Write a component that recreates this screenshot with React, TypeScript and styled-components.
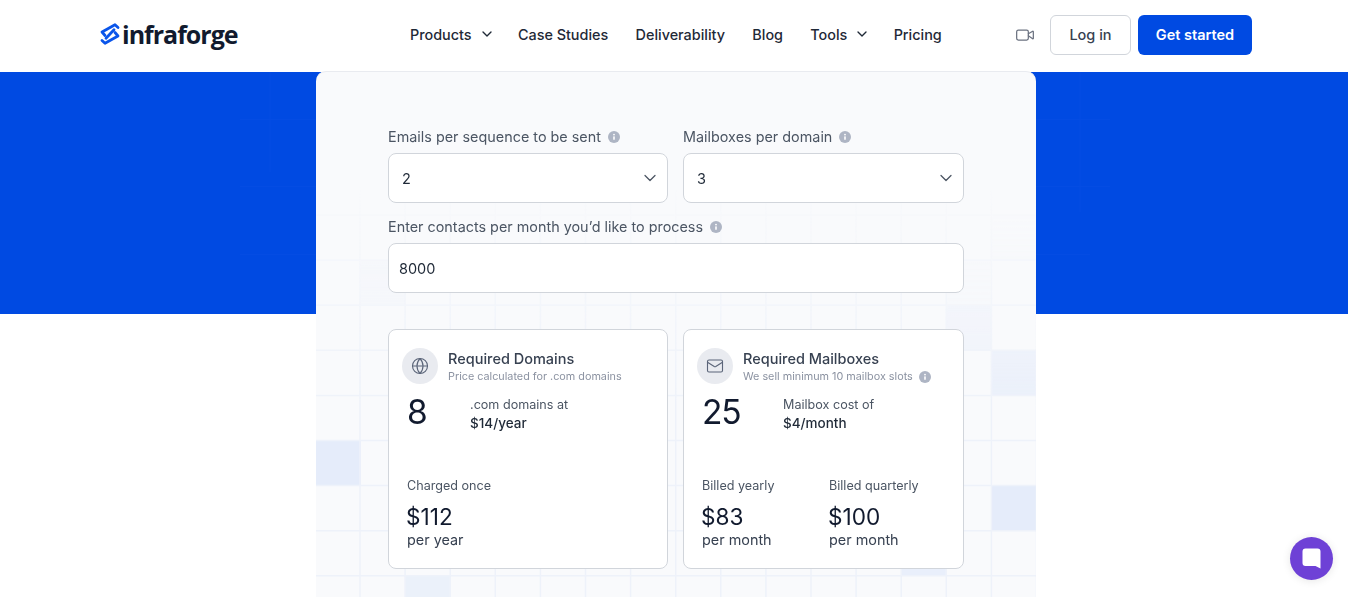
import React from "react";
import styled, { createGlobalStyle } from "styled-components";
import { ChevronDown, Globe, Mail, Video } from "lucide-react";

const Global = createGlobalStyle`
  html, body { margin: 0; padding: 0; height: 597px; overflow: hidden; background: #fff; }
  body { font-family: Inter, "Liberation Sans", sans-serif; color: #111827; }
  * { box-sizing: border-box; }
`;

const Page = styled.div`
  position: relative;
  height: 597px;
  overflow: hidden;
`;

const Header = styled.header`
  height: 72px;
  padding: 15px 96px 0 100px;
  display: flex;
  align-items: flex-start;
  background: #fff;
`;

const Logo = styled.a`
  display: flex;
  align-items: center;
  height: 40px;
  width: 310px;
  padding-bottom: 3px;
  gap: 2px;
  font-family: "Open Sans", sans-serif;
  font-size: 25px;
  font-weight: 700;
  letter-spacing: -1px;
  color: #111a2e;
`;

const Nav = styled.nav`
  display: flex;
  align-items: center;
  gap: 27.3px;
  height: 40px;
  padding-bottom: 2px;
`;

const NavItem = styled.a`
  display: flex;
  align-items: center;
  gap: 7px;
  font-size: 14.4px;
  font-weight: 500;
  color: #1f2937;
  white-space: nowrap;
`;

const NavChevron = styled(ChevronDown)`
  margin-right: -4px;
`;

const Actions = styled.div`
  margin-left: auto;
  display: flex;
  align-items: center;
  height: 40px;
`;

const VideoButton = styled.span`
  display: flex;
  margin-right: 15px;
  color: #6b7280;
`;

const LoginButton = styled.a`
  width: 81px;
  height: 40px;
  margin-right: 7px;
  padding-bottom: 1px;
  display: flex;
  align-items: center;
  justify-content: center;
  border: 1px solid #d1d5db;
  border-radius: 6px;
  background: #fff;
  font-size: 14.5px;
  font-weight: 500;
  color: #374151;
`;

const StartButton = styled.a`
  width: 114px;
  height: 40px;
  padding-bottom: 1px;
  display: flex;
  align-items: center;
  justify-content: center;
  border-radius: 6px;
  background: #004ae2;
  font-size: 14.5px;
  font-weight: 600;
  color: #fff;
`;

const Band = styled.section`
  position: relative;
  height: 242px;
  background: #004ae2;
`;

const BandArt = styled.svg`
  position: absolute;
  inset: 0;
  width: 1348px;
  height: 242px;
`;

const Panel = styled.main`
  position: relative;
  width: 720px;
  height: 560px;
  margin: -243px auto 0 316px;
  padding: 56px 72px 0;
  border-radius: 10px 10px 0 0;
  background: #f9fafc;
  box-shadow: inset 0 1px 0 #e9ebf0;
`;

const GridArt = styled.svg`
  position: absolute;
  inset: 0;
  width: 720px;
  height: 560px;
  pointer-events: none;
`;

const Form = styled.div`
  position: relative;
  display: grid;
  grid-template-columns: 280px 281px;
  column-gap: 15px;
`;

const Field = styled.div<{ $wide?: boolean }>`
  grid-column: ${(p) => (p.$wide ? "1 / -1" : "auto")};
`;

const Label = styled.div`
  display: flex;
  align-items: center;
  gap: 7px;
  height: 20px;
  margin-bottom: 6px;
  font-size: 14.38px;
  line-height: 20px;
  color: #4b5563;
  white-space: nowrap;
`;

const FieldBox = styled.div<{ $select?: boolean }>`
  height: 50px;
  display: flex;
  align-items: center;
  justify-content: space-between;
  padding: ${(p) => (p.$select ? "0 7px 0 13px" : "0 10px")};
  margin-bottom: 14px;
  border: 1px solid #d1d5db;
  border-radius: 8px;
  background: #fff;
  font-size: 14.5px;
  color: #1f2937;
`;

const Chevron = styled(ChevronDown)`
  color: #4b5563;
`;

const Cards = styled.div`
  position: relative;
  grid-column: 1 / -1;
  display: grid;
  grid-template-columns: 280px 281px;
  column-gap: 15px;
  margin-top: 22px;
`;

const Card = styled.article`
  height: 240px;
  padding: 18px 13px 0;
  border: 1px solid #d1d5db;
  border-radius: 8px;
  background: #fff;
`;

const CardHead = styled.div`
  display: flex;
  align-items: center;
  gap: 10px;
`;

const IconCircle = styled.span`
  flex: none;
  width: 36px;
  height: 36px;
  display: flex;
  align-items: center;
  justify-content: center;
  border-radius: 50%;
  background: #e9ebf0;
  color: #5b6579;
`;

const CardTitle = styled.div`
  font-size: 14.5px;
  line-height: 20px;
  font-weight: 500;
  color: #374151;
`;

const CardSub = styled.div`
  display: flex;
  align-items: center;
  gap: 6px;
  margin-top: 1px;
  font-size: 10.8px;
  line-height: 14px;
  color: #8b92a1;
  white-space: nowrap;
`;

const StatRow = styled.div<{ $col: number }>`
  display: grid;
  grid-template-columns: ${(p) => p.$col}px 1fr;
  padding-left: 5px;
  margin-top: 8px;
  height: 85px;
`;

const StatNum = styled.div`
  font-size: 33.5px;
  line-height: 40px;
  letter-spacing: -1.2px;
  color: #111a2e;
`;

const StatText = styled.div`
  font-size: 12.6px;
  line-height: 19px;
  padding-top: 3px;
  color: #4b5563;
`;

const StatStrong = styled.div`
  font-size: 13.5px;
  font-weight: 500;
  color: #1f2937;
`;

const Prices = styled.div`
  display: grid;
  grid-template-columns: 127px 1fr;
  padding-left: 5px;
`;

const PriceLabel = styled.div`
  font-size: 12.6px;
  line-height: 18px;
  color: #4b5563;
`;

const PriceValue = styled.div`
  margin-top: 8px;
  margin-left: -1px;
  font-size: 22.6px;
  line-height: 28px;
  color: #111a2e;
`;

const PriceUnit = styled.div`
  margin-top: -1px;
  font-size: 14.4px;
  line-height: 20px;
  color: #374151;
`;

const Chat = styled.button`
  position: absolute;
  left: 1290px;
  top: 537px;
  width: 43px;
  height: 43px;
  padding: 0;
  display: flex;
  align-items: center;
  justify-content: center;
  border: none;
  border-radius: 50%;
  background: #6e41d6;
  box-shadow: 0 1px 8px rgba(0, 0, 0, 0.1);
`;

const InfoIcon = () => (
  <svg width="12" height="12" viewBox="0 0 12 12" style={{ flex: "none" }}>
    <circle cx="6" cy="6" r="6" fill="#aeb5c4" />
    <rect x="5.2" y="5.2" width="1.6" height="3.6" rx="0.6" fill="#fff" />
    <circle cx="6" cy="3.6" r="0.9" fill="#fff" />
  </svg>
);

const LogoMark = () => (
  <svg width="20" height="22" viewBox="0 0 20 22" fill="none" stroke="#0a55ea" strokeWidth="2.8" strokeLinejoin="round" strokeLinecap="round">
    <path d="M18 4.500 L15 1.800 L2 9 L5 12.500" />
    <path d="M2 17.500 L5 20.200 L18 13 L15 9.500" />
    <path d="M6 15.200 L14 6.800" />
  </svg>
);

type Cell = [number, number, number];
const cells: Cell[] = [
  [0, 370, 1],
  [44, 189, 0.35],
  [631, 234, 0.5],
  [676, 279, 0.75],
  [676, 414, 1],
  [676, 144, 0.15],
  [631, 189, 0.15],
  [89, 504, 0.7],
  [586, 459, 0.8],
];

const Art = () => {
  const xs = Array.from({ length: 16 }, (_, i) => 44 + i * 45.1);
  const ys = Array.from({ length: 9 }, (_, i) => 144 + i * 45.1);
  return (
    <GridArt viewBox="0 0 720 560">
      <defs>
        <linearGradient id="fade" x1="0" y1="0" x2="0" y2="1">
          <stop offset="0.2" stopColor="#fff" stopOpacity="0" />
          <stop offset="0.6" stopColor="#fff" stopOpacity="1" />
        </linearGradient>
        <mask id="m">
          <rect width="720" height="560" fill="url(#fade)" />
        </mask>
      </defs>
      <g mask="url(#m)">
        {cells.map(([x, y, o]) => (
          <rect key={`${x}-${y}`} x={x} y={y} width="45" height="45" fill="#e5ecfa" opacity={o} />
        ))}
        {xs.map((x) => (
          <line key={x} x1={x} x2={x} y1="100" y2="560" stroke="#eef2fa" strokeWidth="1.5" />
        ))}
        {ys.map((y) => (
          <line key={y} x1="0" x2="720" y1={y} y2={y} stroke="#eef2fa" strokeWidth="1.5" />
        ))}
      </g>
    </GridArt>
  );
};

const navItems: { label: string; menu?: boolean }[] = [
  { label: "Products", menu: true },
  { label: "Case Studies" },
  { label: "Deliverability" },
  { label: "Blog" },
  { label: "Tools", menu: true },
  { label: "Pricing" },
];

export default function App() {
  return (
    <Page>
      <Global />
      <Header>
        <Logo>
          <LogoMark />
          infraforge
        </Logo>
        <Nav>
          {navItems.map((n) => (
            <NavItem key={n.label}>
              {n.label}
              {n.menu && <NavChevron size={16} strokeWidth={2} />}
            </NavItem>
          ))}
        </Nav>
        <Actions>
          <VideoButton>
            <Video size={20} strokeWidth={1.5} />
          </VideoButton>
          <LoginButton>Log in</LoginButton>
          <StartButton>Get started</StartButton>
        </Actions>
      </Header>
      <Band>
        <BandArt viewBox="0 0 1348 242" fill="none" stroke="#044ce3" strokeWidth="1">
          <path d="M240 47.500H316M270 0V100M240 114.500H316M240 182.500H316" />
          <path d="M1036 47.500H1110M1080 0V140M1036 114.500H1110M1036 182.500H1090" />
        </BandArt>
      </Band>
      <Panel>
        <Art />
        <Form>
          <Field>
            <Label>
              Emails per sequence to be sent <InfoIcon />
            </Label>
            <FieldBox $select>
              2
              <Chevron size={20} strokeWidth={1.5} />
            </FieldBox>
          </Field>
          <Field>
            <Label>
              Mailboxes per domain <InfoIcon />
            </Label>
            <FieldBox $select>
              3
              <Chevron size={20} strokeWidth={1.5} />
            </FieldBox>
          </Field>
          <Field $wide>
            <Label>
              Enter contacts per month you’d like to process <InfoIcon />
            </Label>
            <FieldBox>8000</FieldBox>
          </Field>
          <Cards>
            <Card>
              <CardHead>
                <IconCircle>
                  <Globe size={18} strokeWidth={1.5} />
                </IconCircle>
                <div>
                  <CardTitle>Required Domains</CardTitle>
                  <CardSub>Price calculated for .com domains</CardSub>
                </div>
              </CardHead>
              <StatRow $col={63}>
                <StatNum>8</StatNum>
                <StatText>
                  .com domains at
                  <StatStrong>$14/year</StatStrong>
                </StatText>
              </StatRow>
              <Prices>
                <div>
                  <PriceLabel>Charged once</PriceLabel>
                  <PriceValue>$112</PriceValue>
                  <PriceUnit>per year</PriceUnit>
                </div>
              </Prices>
            </Card>
            <Card>
              <CardHead>
                <IconCircle>
                  <Mail size={18} strokeWidth={1.5} />
                </IconCircle>
                <div>
                  <CardTitle>Required Mailboxes</CardTitle>
                  <CardSub>
                    We sell minimum 10 mailbox slots <InfoIcon />
                  </CardSub>
                </div>
              </CardHead>
              <StatRow $col={81}>
                <StatNum>25</StatNum>
                <StatText>
                  Mailbox cost of
                  <StatStrong>$4/month</StatStrong>
                </StatText>
              </StatRow>
              <Prices>
                <div>
                  <PriceLabel>Billed yearly</PriceLabel>
                  <PriceValue>$83</PriceValue>
                  <PriceUnit>per month</PriceUnit>
                </div>
                <div>
                  <PriceLabel>Billed quarterly</PriceLabel>
                  <PriceValue>$100</PriceValue>
                  <PriceUnit>per month</PriceUnit>
                </div>
              </Prices>
            </Card>
          </Cards>
        </Form>
      </Panel>
      <Chat aria-label="Chat">
        <svg width="19" height="21" viewBox="0 0 19 21">
          <path d="M3.500 0.500h12a3 3 0 0 1 3 3v17l-5-2.500H3.500a3 3 0 0 1-3-3V3.500a3 3 0 0 1 3-3z" fill="#fff" />
        </svg>
      </Chat>
    </Page>
  );
}
